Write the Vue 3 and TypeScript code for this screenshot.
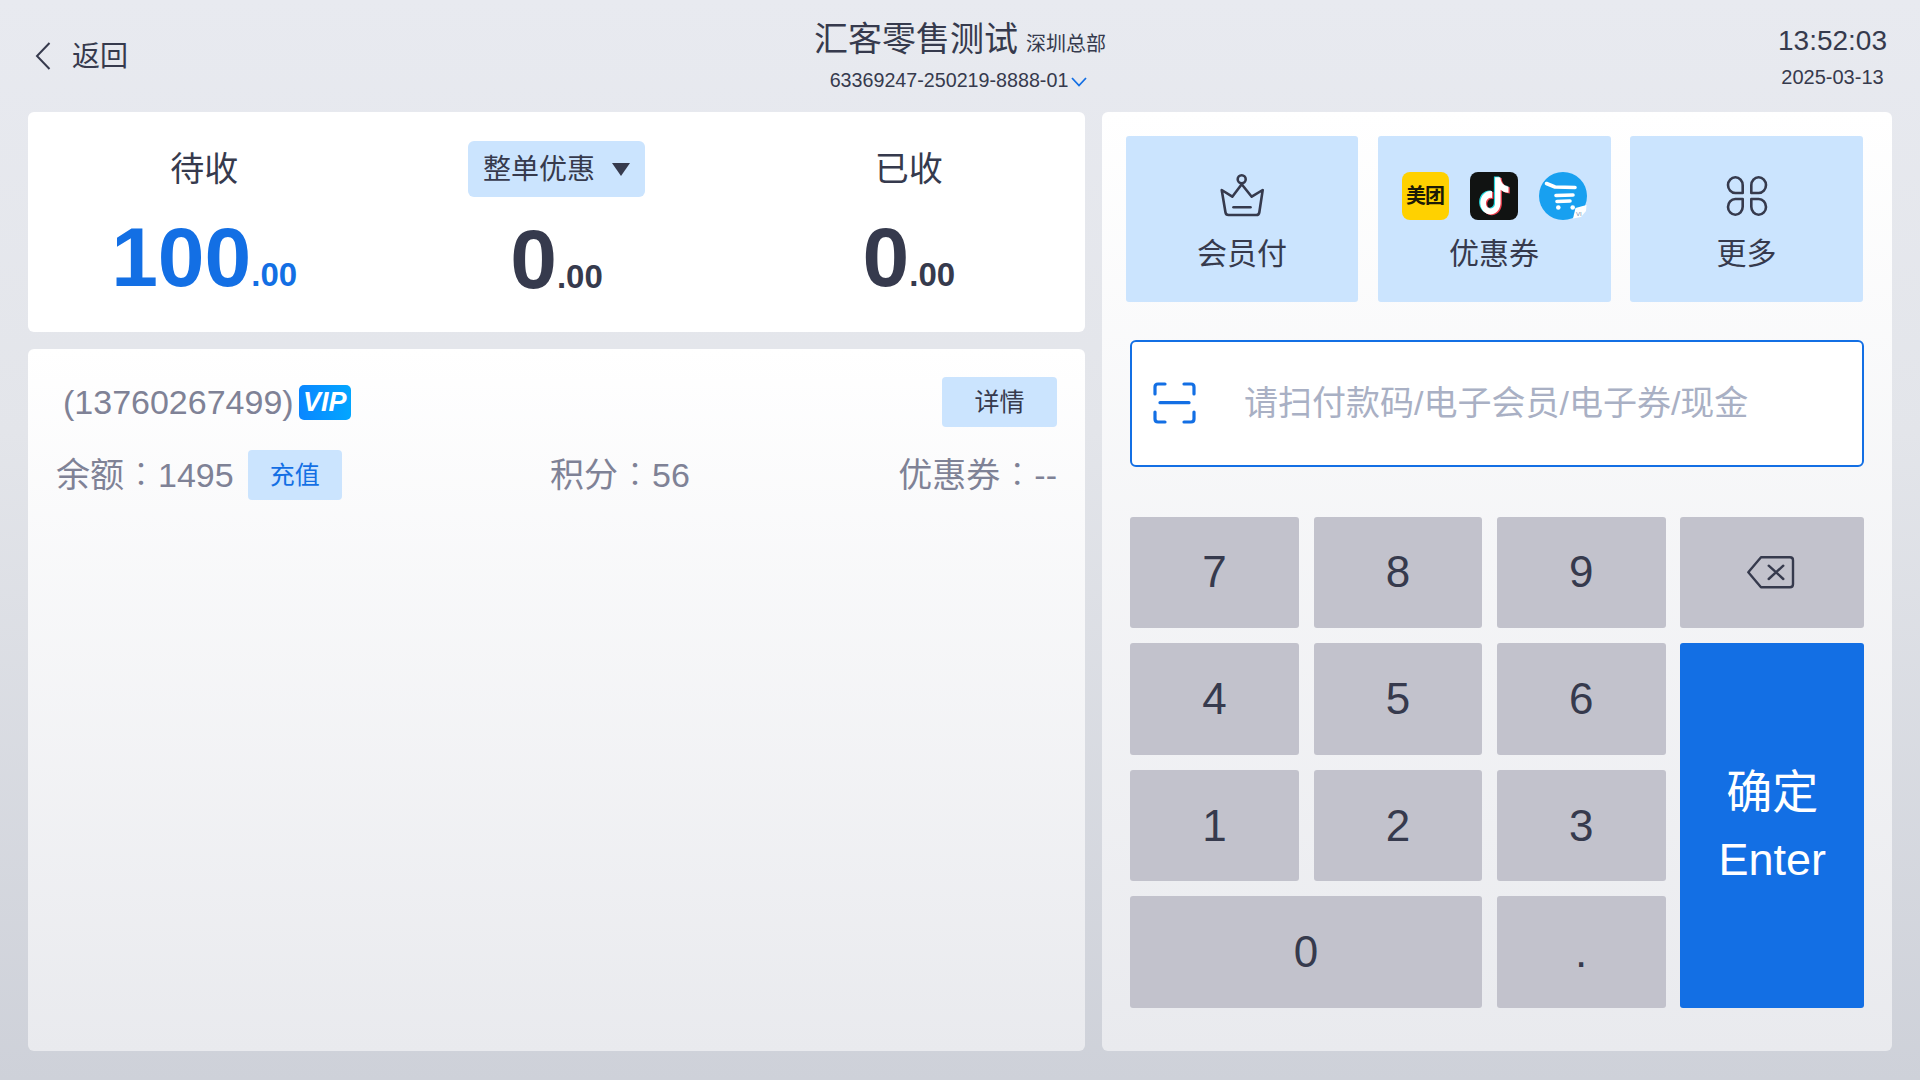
<template>
  <div class="page">
    <header class="top">
      <div class="back">
        <svg class="back-ico" viewBox="0 0 16 28" fill="none"><path d="M14.5 1 2 14l12.5 13" stroke="#363a4d" stroke-width="2" /></svg>
        <span>返回</span>
      </div>
      <div class="shop">
        <div class="shop-name">汇客零售测试<small>深圳总部</small></div>
        <div class="shop-code">
          {{ orderNo }}
          <svg class="code-arrow" viewBox="0 0 16 10" fill="none"><path d="M1 1l7 7.500L15 1" stroke="#136fe4" stroke-width="1.800" /></svg>
        </div>
      </div>
      <div class="clock">
        <div class="clock-time">13:52:03</div>
        <div class="clock-date">2025-03-13</div>
      </div>
    </header>

    <main class="main">
      <section class="left">
        <div class="sums">
          <div class="sum">
            <div class="sum-label">待收</div>
            <div class="sum-val blue">100<i>.00</i></div>
          </div>
          <div class="sum">
            <div class="discount">整单优惠<b class="caret"></b></div>
            <div class="sum-val low">0<i>.00</i></div>
          </div>
          <div class="sum">
            <div class="sum-label">已收</div>
            <div class="sum-val">0<i>.00</i></div>
          </div>
        </div>

        <div class="member">
          <div class="member-row">
            <div class="phone">(13760267499)<span class="vip">VIP</span></div>
            <button class="tag-btn">详情</button>
          </div>
          <div class="member-row second">
            <div class="stat">
              <span class="stat-text">余额<em>：</em>1495</span>
              <button class="tag-btn recharge">充值</button>
            </div>
            <div class="stat"><span class="stat-text">积分<em>：</em>56</span></div>
            <div class="stat"><span class="stat-text">优惠券<em>：</em>--</span></div>
          </div>
        </div>
      </section>

      <section class="right">
        <div class="features">
          <div class="feature">
            <div class="feature-ico">
              <svg width="48" height="46" viewBox="18 8 48 46" fill="none" stroke="#363a4d" stroke-width="2.6" stroke-linejoin="round" stroke-linecap="round">
                <circle cx="41.7" cy="14.3" r="4" />
                <path d="M21.7 25l10.6 6.7 9.4-12.4 10 12.4 11-6.7-3.4 22.5q-.4 2.5-3 2.5H28.500q-2.600 0-3-2.500z" />
                <path d="M33.500 42.300h17" />
              </svg>
            </div>
            <span>会员付</span>
          </div>
          <div class="feature">
            <div class="feature-ico brands">
              <div class="meituan">美团</div>
              <svg width="48" height="48" viewBox="0 0 48 48">
                <rect width="48" height="48" rx="8" fill="#111312" />
                <path :d="notePath" fill="#25d8e0" transform="translate(7 4.500) scale(1.35 1.55)" />
                <path :d="notePath" fill="#f0404f" transform="translate(9.500 6) scale(1.35 1.55)" />
                <path :d="notePath" fill="#fff" transform="translate(8.200 5.200) scale(1.35 1.55)" />
              </svg>
              <svg width="48" height="48" viewBox="0 0 48 48" fill="none">
                <circle cx="24" cy="24" r="24" fill="#18a0f0" />
                <path d="M7.500 11.500l8.500 3.500 20 .5M17 23.500l17-.5M18 29.500l13-.5" stroke="#fff" stroke-width="3.600" stroke-linecap="round" stroke-linejoin="round" />
                <circle cx="19.300" cy="35.500" r="2.300" fill="#fff" />
                <circle cx="33.700" cy="35.500" r="2.300" fill="#fff" />
                <path d="M34 46.500L36.500 36l11-3-.5 6-5 6z" fill="#fff" />
                <text x="37" y="44" font-size="6" fill="#6d8fb0" font-family="Liberation Sans, sans-serif">VI</text>
              </svg>
            </div>
            <span>优惠券</span>
          </div>
          <div class="feature">
            <div class="feature-ico">
              <svg width="48" height="46" viewBox="12 8 48 46" fill="none" stroke="#363a4d" stroke-width="2.600" stroke-linejoin="round">
                <path d="M31.700 28H24.300a7.350 7.850 0 1 1 7.400-7.850z" />
                <path d="M40.300 28h7.400a7.350 7.850 0 1 0-7.400-7.850z" />
                <path d="M31.700 34H24.300a7.350 7.850 0 1 0 7.400 7.850z" />
                <path d="M40.300 34h7.400a7.350 7.850 0 1 1-7.400 7.850z" />
              </svg>
            </div>
            <span>更多</span>
          </div>
        </div>

        <div class="scan-box">
          <svg class="scan-ico" width="56" height="55" viewBox="0 0 56 55" fill="none" stroke="#136fe4" stroke-width="3.200" stroke-linecap="round" stroke-linejoin="round">
            <path d="M20 8h-7q-3 0-3 3v7M39 8h7q3 0 3 3v7M10 36v7q0 3 3 3h7M49 36v7q0 3-3 3h-7" />
            <path d="M15 26.700h29" />
          </svg>
          <span class="scan-hint">请扫付款码/电子会员/电子券/现金</span>
        </div>

        <div class="keypad">
          <button v-for="k in digits" :key="k" class="key" :class="{ wide: k === '0' }">{{ k }}</button>
          <button class="key del">
            <svg width="70" height="55" viewBox="0 0 70 55" fill="none" stroke="#363a4d" stroke-width="2.400" stroke-linejoin="round">
              <path d="M7.300 27.300L20 12.300h29q3 0 3 3v24q0 3-3 3H20z" />
              <path d="M27.700 20.700l14.600 13.300M42.300 20.700L27.700 34" stroke-linecap="round" />
            </svg>
          </button>
          <button class="key enter"><span class="enter-cn">确定</span><span>Enter</span></button>
        </div>
      </section>
    </main>
  </div>
</template>

<script setup lang="ts">
const orderNo = '63369247-250219-8888-01'
const digits: string[] = ['7', '8', '9', '4', '5', '6', '1', '2', '3', '0', '.']
const notePath =
  'M12.525.02c1.31-.02 2.61-.01 3.91-.02.08 1.53.63 3.09 1.75 4.17 1.12 1.11 2.7 1.62 4.24 1.79v4.03c-1.44-.05-2.89-.35-4.2-.97-.57-.26-1.1-.59-1.62-.93-.01 2.92.01 5.84-.02 8.75-.08 1.4-.54 2.79-1.35 3.94-1.31 1.92-3.58 3.17-5.91 3.21-1.43.08-2.86-.31-4.08-1.03-2.02-1.19-3.44-3.37-3.65-5.71-.02-.5-.03-1-.01-1.49.18-1.9 1.12-3.72 2.58-4.96 1.66-1.44 3.98-2.13 6.15-1.72.02 1.48-.04 2.96-.04 4.44-.99-.32-2.15-.23-3.02.37-.63.41-1.11 1.04-1.36 1.75-.21.51-.15 1.07-.14 1.61.24 1.64 1.82 3.02 3.5 2.87 1.12-.01 2.19-.66 2.77-1.61.19-.33.4-.67.41-1.06.1-1.79.06-3.57.07-5.36.01-4.03-.01-8.05.02-12.07z'
</script>

<style>
html,
body {
  margin: 0;
}
</style>

<style scoped>
.page {
  height: 1080px;
  display: flex;
  flex-direction: column;
  box-sizing: border-box;
  padding: 0 28px 29px;
  background: linear-gradient(180deg, #e8eaf0 0%, #e3e5ea 40%, #ced1d9 100%);
  font-family: "Liberation Sans", "Noto Sans CJK SC", sans-serif;
  color: #363a4d;
  overflow: hidden;
}

button {
  font-family: inherit;
  border: none;
  padding: 0;
}

.top {
  height: 112px;
  flex: none;
  display: grid;
  grid-template-columns: 1fr auto 1fr;
  align-items: start;
}

.back {
  display: flex;
  align-items: center;
  gap: 21px;
  font-size: 28px;
  margin-top: 43px;
  padding-left: 7px;
  line-height: 28px;
}

.back-ico {
  width: 16px;
  height: 28px;
  margin-top: -2px;
}

.shop {
  text-align: center;
  padding-top: 18px;
}

.shop-name {
  font-size: 34px;
  line-height: 42px;
  display: flex;
  align-items: baseline;
  gap: 8px;
}

.shop-name small {
  font-size: 20px;
}

.shop-code {
  font-size: 19.7px;
  line-height: 24px;
  margin-top: 3px;
  padding-right: 3px;
  display: flex;
  justify-content: center;
  align-items: center;
  gap: 3px;
}

.code-arrow {
  width: 16px;
  height: 10px;
  margin-top: 3px;
}

.clock {
  justify-self: end;
  text-align: center;
  margin-right: 5px;
  padding-top: 25px;
}

.clock-time {
  font-size: 28px;
  line-height: 32px;
}

.clock-date {
  font-size: 20px;
  line-height: 24px;
  margin-top: 8px;
}

.main {
  flex: 1;
  min-height: 0;
  display: grid;
  grid-template-columns: 1057px 790px;
  gap: 17px;
}

.left {
  display: flex;
  flex-direction: column;
  gap: 17px;
}

.sums {
  height: 220px;
  flex: none;
  box-sizing: border-box;
  padding-top: 29px;
  display: grid;
  grid-template-columns: repeat(3, 1fr);
  background: #fff;
  border-radius: 6px;
}

.sum {
  display: flex;
  flex-direction: column;
  align-items: center;
}

.sum-label {
  height: 56px;
  line-height: 56px;
  font-size: 34px;
}

.sum-val {
  margin-top: 18px;
  font-size: 84px;
  line-height: 84px;
  font-weight: 700;
}

.sum-val i {
  font-style: normal;
  font-size: 33px;
}

.sum-val.blue {
  color: #136fe4;
}

.sum-val.low {
  margin-top: 20px;
}

.discount {
  width: 177px;
  height: 56px;
  box-sizing: border-box;
  padding-bottom: 4px;
  display: flex;
  align-items: center;
  justify-content: center;
  gap: 17px;
  background: #cbe4fe;
  border-radius: 6px;
  font-size: 28px;
}

.caret {
  width: 0;
  height: 0;
  margin-top: 4px;
  border-left: 9px solid transparent;
  border-right: 9px solid transparent;
  border-top: 13px solid #363a4d;
}

.member {
  flex: 1;
  box-sizing: border-box;
  padding: 28px 28px 0;
  background: linear-gradient(180deg, #fff 0%, #e9eaee 100%);
  border-radius: 6px;
}

.member-row {
  display: flex;
  align-items: center;
  justify-content: space-between;
}

.member-row.second {
  margin-top: 23px;
}

.phone {
  display: flex;
  align-items: center;
  gap: 5px;
  padding-left: 7px;
  font-size: 34px;
  color: #7f8296;
}

.vip {
  width: 52px;
  height: 35px;
  border-radius: 5px;
  background: linear-gradient(90deg, #0a86ff, #03a6ff);
  color: #fff;
  font-size: 27px;
  font-weight: 700;
  font-style: italic;
  line-height: 35px;
  text-align: center;
}

.tag-btn {
  width: 115px;
  height: 50px;
  box-sizing: border-box;
  padding-bottom: 4px;
  border-radius: 4px;
  background: #cbe4fe;
  color: #363a4d;
  font-size: 25px;
}

.stat {
  display: flex;
  align-items: center;
  font-size: 34px;
  color: #7f8296;
}

.stat-text {
  margin-top: -5px;
}

/* centred full-width colon, as the traditional Chinese cut draws it */
.stat-text em {
  font-style: normal;
  font-weight: 300;
  font-family: "Noto Sans CJK TC", sans-serif;
}

.recharge {
  width: 94px;
  margin-left: 14px;
  color: #136fe4;
}

.right {
  box-sizing: border-box;
  display: flex;
  flex-direction: column;
  padding: 24px 28px 43px;
  background: linear-gradient(180deg, #fff 0%, #e9eaee 100%);
  border-radius: 6px;
}

.features {
  display: grid;
  grid-template-columns: 232px 233px 233px;
  column-gap: 19.5px;
  margin: 0 1px 0 -4px;
}

.feature {
  height: 166px;
  box-sizing: border-box;
  padding-top: 36px;
  display: flex;
  flex-direction: column;
  align-items: center;
  gap: 16px;
  background: #cbe4fe;
  border-radius: 3px;
  font-size: 30px;
  line-height: 36px;
}

.feature-ico {
  height: 48px;
  display: flex;
  align-items: center;
}

.brands {
  gap: 21px;
}

.meituan {
  width: 47px;
  height: 48px;
  border-radius: 8px;
  background: #ffd100;
  color: #1d1a05;
  font-size: 20px;
  font-weight: 700;
  line-height: 48px;
  text-align: center;
  letter-spacing: -1px;
}

.scan-box {
  height: 127px;
  flex: none;
  box-sizing: border-box;
  margin-top: 38px;
  display: flex;
  align-items: center;
  border: 2px solid #136fe4;
  border-radius: 6px;
  background: #fff;
  padding-left: 13px;
}

.scan-hint {
  margin-left: 43px;
  margin-top: -6px;
  font-size: 34px;
  color: #a9b0c4;
}

.keypad {
  flex: 1;
  min-height: 0;
  margin-top: 49.7px;
  display: grid;
  grid-template-columns: 169.2px 168px 169.2px 1fr;
  grid-template-rows: repeat(4, 1fr);
  gap: 15px 14.7px;
}

.key {
  background: #c2c2cc;
  border-radius: 3px;
  color: #363a4d;
  font-size: 44px;
}

/* 7 8 9 sit in the first three cells, the delete key closes the row */
.key:nth-child(n + 4):nth-child(-n + 6) {
  grid-row: 2;
}

.key:nth-child(n + 7):nth-child(-n + 9) {
  grid-row: 3;
}

.key.wide {
  grid-row: 4;
  grid-column: 1 / span 2;
}

.key:nth-child(11) {
  grid-row: 4;
  grid-column: 3;
}

.del {
  grid-row: 1;
  grid-column: 4;
  display: flex;
  align-items: center;
  justify-content: center;
  padding-left: 7px;
}

.enter {
  grid-row: 2 / span 3;
  grid-column: 4;
  background: #136fe4;
  color: #fff;
  display: flex;
  flex-direction: column;
  align-items: center;
  justify-content: center;
  font-size: 45px;
  line-height: 67px;
}

.enter-cn {
  font-size: 46px;
}
</style>
